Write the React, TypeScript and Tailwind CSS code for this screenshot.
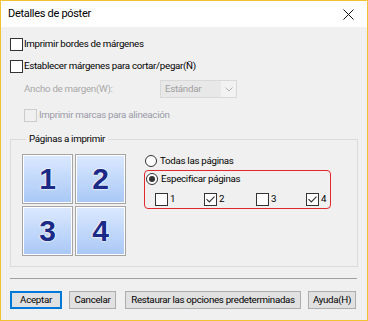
const Check = ({ checked = false, disabled = false }: { checked?: boolean; disabled?: boolean }) => (
    <span
        className={`flex h-[13px] w-[13px] shrink-0 items-center justify-center border ${disabled ? 'border-[#cccccc] bg-[#f0f0f0]' : 'border-[#333333] bg-white'}`}
    >
        {checked && (
            <svg width="9" height="7" viewBox="0 0 9 7">
                <path d="M0.5 3.2 L3.3 6 L8.5 0.6" fill="none" stroke="#333" strokeWidth="1.1" />
            </svg>
        )}
    </span>
);

const Radio = ({ checked = false }: { checked?: boolean }) => (
    <span className="flex h-[12px] w-[12px] shrink-0 items-center justify-center rounded-full border border-[#333333] bg-white">
        {checked && <span className="h-[6px] w-[6px] rounded-full bg-[#333333]" />}
    </span>
);

const Tile = ({ n }: { n: number }) => (
    <div className="flex h-[50px] w-[51px] items-center justify-center border border-[#a5a5a5] bg-gradient-to-b from-[#dbe9ff] to-[#a9c8f6] shadow-[inset_0_0_0_1px_#ffffff]">
        <span
            className="text-[30px] font-bold leading-none tracking-normal text-[#1b2a86]"
            style={{ fontFamily: '"Liberation Sans", Arial, sans-serif', textShadow: '0 0 2px #fff, 0 0 2px #fff, 0 0 1px #fff' }}
        >
            {n}
        </span>
    </div>
);

const Button = ({ label, w, primary = false }: { label: string; w: string; primary?: boolean }) => (
    <button
        className={`flex h-[18px] items-center justify-center whitespace-nowrap bg-[#e1e1e1] text-black ${w} ${primary ? 'border-2 border-[#0078d7]' : 'border border-[#adadad]'}`}
    >
        {label}
    </button>
);

export default function App() {
    const pages = [
        { n: 1, checked: false, w: 'w-[49px]' },
        { n: 2, checked: true, w: 'w-[52px]' },
        { n: 3, checked: false, w: 'w-[50px]' },
        { n: 4, checked: true, w: '' },
    ];

    return (
        <div
            className="flex h-[321px] w-[368px] flex-col border border-[#f1c232] text-[9.75px] tracking-[-0.3px] text-black"
            style={{ fontFamily: 'Roboto, "Liberation Sans", sans-serif' }}
        >
            {/* barra de título */}
            <div className="flex h-[26px] shrink-0 items-center justify-between bg-white pr-[13px] pl-[7px]">
                <span className="text-[11px] tracking-[-0.3px]">Detalles de póster</span>
                <svg width="11" height="11" viewBox="0 0 11 11">
                    <path d="M0.5 0.5 L10.5 10.5 M10.5 0.5 L0.5 10.5" stroke="#111" strokeWidth="1" />
                </svg>
            </div>

            <div className="flex flex-1 flex-col bg-[#f0f0f0] px-[9px] pt-[11px]">
                <label className="flex h-[13px] items-center gap-[1px]">
                    <Check />
                    <span>Imprimir bordes de márgenes</span>
                </label>
                <label className="mt-[9px] flex h-[13px] items-center gap-[1px]">
                    <Check />
                    <span>Establecer márgenes para cortar/pegar(Ñ)</span>
                </label>

                <div className="mt-[7px] flex h-[18px] items-center pl-[14px]">
                    <span className="w-[136px] text-[#a8a8a8]">Ancho de margen(W):</span>
                    <div className="flex h-[18px] w-[77px] items-center justify-between border border-[#d9d9d9] bg-[#e8e8e8] pl-[4px]">
                        <span className="text-[#a0a0a0]">Estándar</span>
                        <span className="flex h-full w-[15px] items-center justify-center bg-[#f2f2f2]">
                            <svg width="8" height="5" viewBox="0 0 8 5">
                                <path d="M0.5 0.5 L4 4 L7.5 0.5" fill="none" stroke="#b0b0b0" strokeWidth="1" />
                            </svg>
                        </span>
                    </div>
                </div>

                <label className="mt-[11px] flex h-[13px] items-center gap-[2px] pl-[14px]">
                    <Check disabled />
                    <span className="text-[#9a9aa8]">Imprimir marcas para alineación</span>
                </label>

                <fieldset className="mt-[10px] h-[135px] border border-[#dcdcdc] px-[11px] pt-[8px]">
                    <legend className="ml-[4px] px-[3px] leading-[14px]">Páginas a imprimir</legend>
                    <div className="flex">
                        <div className="grid grid-cols-2 gap-[2px]">
                            {[1, 2, 3, 4].map((n) => (
                                <Tile key={n} n={n} />
                            ))}
                        </div>

                        <div className="ml-[18px] flex flex-col">
                            <label className="flex h-[14px] items-center gap-[3px] pl-[1px]">
                                <Radio />
                                <span>Todas las páginas</span>
                            </label>
                            <div className="mt-[2px] flex h-[39px] w-[187px] flex-col rounded-[4px] border-[1.5px] border-[#e2272d] pt-[1px] pl-[1px]">
                                <label className="flex h-[14px] items-center gap-[3px]">
                                    <Radio checked />
                                    <span>Especificar páginas</span>
                                </label>
                                <div className="mt-[6px] flex items-center pl-[9px]">
                                    {pages.map((p) => (
                                        <label key={p.n} className={`flex items-center gap-[2px] ${p.w}`}>
                                            <Check checked={p.checked} />
                                            <span>{p.n}</span>
                                        </label>
                                    ))}
                                </div>
                            </div>
                        </div>
                    </div>
                </fieldset>

                <div className="mt-[11px] h-px w-[347px] bg-[#a0a0a0]" />

                <div className="mt-[12px] flex items-center">
                    <Button label="Aceptar" w="w-[52px]" primary />
                    <div className="ml-[7px]">
                        <Button label="Cancelar" w="w-[47px]" />
                    </div>
                    <div className="ml-[9px]">
                        <Button label="Restaurar las opciones predeterminadas" w="w-[176px]" />
                    </div>
                    <div className="ml-[7px]">
                        <Button label="Ayuda(H)" w="w-[48px]" />
                    </div>
                </div>
            </div>
        </div>
    );
}
